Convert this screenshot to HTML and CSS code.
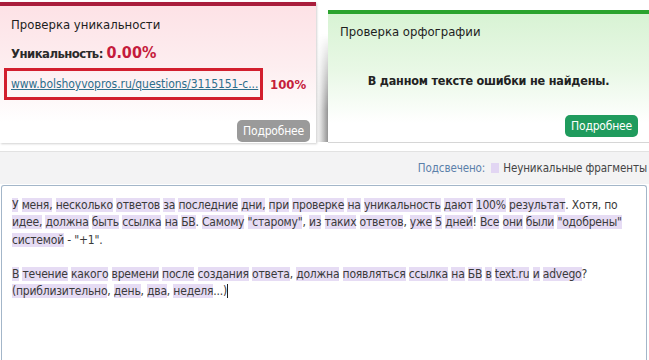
FILE: index.html
```html
<!DOCTYPE html>
<html lang="ru">
<head>
<meta charset="utf-8">
<link rel="stylesheet" href="styles.css">
</head>
<body>
<div class="top">
  <div class="panel panel-uniq">
    <div class="panel-title">Проверка уникальности</div>
    <div class="uniq-row">Уникальность: <span class="uniq-val">0.00%</span></div>
    <div class="source-row">
      <div class="source-box"><a class="source-link" href="#">www.bolshoyvopros.ru/questions/3115151-c...</a></div>
      <span class="source-pct">100%</span>
    </div>
    <div class="btn-row"><span class="btn btn-gray">Подробнее</span></div>
  </div>
  <div class="panel panel-spell">
    <div class="panel-title">Проверка орфографии</div>
    <div class="spell-msg">В данном тексте ошибки не найдены.</div>
    <div class="btn-row"><span class="btn btn-green">Подробнее</span></div>
  </div>
</div>
<div class="legend">
  <span class="legend-label">Подсвечено:</span>
  <span class="legend-swatch"></span>
  <span class="legend-text">Неуникальные фрагменты</span>
</div>
<div class="textbox">
  <div class="line"><span class="h">У</span> <span class="h">меня,</span> <span class="h">несколько</span> <span class="h">ответов</span> <span class="h">за</span> <span class="h">последние</span> <span class="h">дни,</span> <span class="h">при</span> <span class="h">проверке</span> <span class="h">на</span> <span class="h">уникальность</span> <span class="h">дают</span> <span class="h">100%</span> <span class="h">результат</span>. Хотя, по</div>
  <div class="line"><span class="h">идее,</span> <span class="h">должна</span> <span class="h">быть</span> <span class="h">ссылка</span> <span class="h">на</span> <span class="h">БВ</span>. <span class="h">Самому</span> <span class="h">"старому"</span>, <span class="h">из</span> <span class="h">таких</span> <span class="h">ответов</span>, <span class="h">уже</span> <span class="h">5</span> <span class="h">дней</span>! <span class="h">Все</span> <span class="h">они</span> <span class="h">были</span> <span class="h">"одобрены"</span></div>
  <div class="line"><span class="h">системой</span> - "+1".</div>
  <div class="line">&nbsp;</div>
  <div class="line"><span class="h">В</span> <span class="h">течение</span> <span class="h">какого</span> <span class="h">времени</span> <span class="h">после</span> <span class="h">создания</span> <span class="h">ответа</span>, <span class="h">должна</span> <span class="h">появляться</span> <span class="h">ссылка</span> <span class="h">на</span> <span class="h">БВ</span> <span class="h">в</span> <span class="h">text.ru</span> <span class="h">и</span> <span class="h">advego</span>?</div>
  <div class="line"><span class="h">(приблизительно</span>, <span class="h">день</span>, <span class="h">два</span>, <span class="h">неделя</span>...)<span class="caret"></span></div>
</div>
</body>
</html>
```
FILE: styles.css
```css
html, body {
  margin: 0;
  padding: 0;
  background: #fff;
  overflow: hidden;
}
body {
  width: 649px;
  height: 360px;
  font-family: "DejaVu Sans Condensed", "DejaVu Sans", "Liberation Sans", sans-serif;
  font-stretch: condensed;
  color: #333;
}
.top {
  display: flex;
  height: 150px;
  align-items: flex-start;
}
.panel {
  position: relative;
  box-sizing: border-box;
}
.panel-uniq {
  width: 316px;
  margin-top: 2px;
  height: 141px;
  border-top: 4px solid #a91d3c;
  background: linear-gradient(#fde2e6 0%, #fdeef0 45%, #ffffff 85%);
  box-shadow: 1px 1px 2px rgba(0,0,0,0.18);
  padding: 0 0 0 11px;
}
.panel-spell {
  flex: 1;
  margin-left: 12px;
  margin-top: 10px;
  height: 133px;
  border-top: 4px solid #2ba32e;
  background: linear-gradient(#d8f3d4 0%, #e9f8e6 45%, #ffffff 85%);
  border-bottom: 1px solid #d6d6d6;
  padding: 0 0 0 12px;
}
.panel-spell::before {
  content: "";
  position: absolute;
  left: -12px;
  top: 20px;
  width: 12px;
  bottom: 0;
  background: linear-gradient(90deg, rgba(255,255,255,0) 0%, rgba(120,120,120,0.25) 40%, rgba(60,60,60,0.55) 100%);
  -webkit-mask-image: linear-gradient(rgba(0,0,0,0), #000 70%);
  mask-image: linear-gradient(rgba(0,0,0,0), #000 70%);
}
.panel-title {
  font-size: 13px;
  line-height: 16px;
  color: #1e1e1e;
  margin-top: 11px;
}
.panel-spell .panel-title {
  margin-top: 10px;
}
.uniq-row {
  margin-top: 9px;
  font-size: 13px;
  font-weight: bold;
  line-height: 22px;
  color: #2a2a2a;
  letter-spacing: -0.55px;
}
.uniq-val {
  font-size: 16px;
  color: #c51b3c;
  letter-spacing: 0;
}
.source-row {
  display: flex;
  align-items: center;
  margin-top: 3px;
  margin-left: -7px;
}
.source-box {
  box-sizing: border-box;
  width: 259px;
  height: 32px;
  border: 3px solid #d21f2e;
  padding: 0 0 0 4px;
  display: flex;
  align-items: center;
}
.source-link {
  font-size: 12px;
  color: #2d6e8c;
  text-decoration: underline;
  letter-spacing: -0.05px;
  white-space: nowrap;
}
.source-pct {
  margin-left: 7px;
  font-size: 13px;
  font-weight: bold;
  color: #c5203a;
}
.btn-row {
  display: flex;
  justify-content: flex-end;
}
.panel-uniq .btn-row {
  margin-top: 20px;
  padding-right: 6px;
}
.panel-spell .btn-row {
  margin-top: 25px;
  padding-right: 11px;
}
.btn {
  display: inline-block;
  width: 73px;
  height: 22px;
  line-height: 22px;
  text-align: center;
  border-radius: 5px;
  color: #fff;
  font-size: 12px;
  letter-spacing: -0.2px;
}
.btn-gray { background: #9a9a9a; }
.btn-green { background: #1f9b5d; }
.spell-msg {
  margin-top: 32px;
  margin-left: -12px;
  text-align: center;
  font-size: 12.5px;
  font-weight: bold;
  line-height: 18px;
  color: #222;
  letter-spacing: -0.2px;
}
.legend {
  margin-top: 1px;
  height: 33px;
  box-sizing: border-box;
  border-top: 1px solid #e2e2e2;
  background: #f3f3f4;
  display: flex;
  align-items: center;
  justify-content: flex-end;
  padding-right: 2px;
  font-size: 11.5px;
  letter-spacing: -0.1px;
}
.legend-label { color: #5b80aa; }
.legend-swatch {
  display: inline-block;
  width: 8px;
  height: 10px;
  background: #e2d6f3;
  margin: 0 4px 0 6px;
}
.legend-text { color: #444; }
.textbox {
  margin: 1px 2px 0 1px;
  height: 175px;
  box-sizing: border-box;
  border: 1px solid #a3b6c9;
  border-bottom: none;
  border-radius: 3px 3px 0 0;
  background: #fff;
  padding: 11px 0 0 10px;
  font-size: 12px;
  line-height: 17.3px;
  color: #3a3a3a;
  letter-spacing: -0.2px;
}
.line {
  white-space: nowrap;
}
.h {
  background: #e6dcf4;
}
.caret {
  display: inline-block;
  width: 1px;
  height: 14px;
  background: #222;
  vertical-align: -3px;
}
```
